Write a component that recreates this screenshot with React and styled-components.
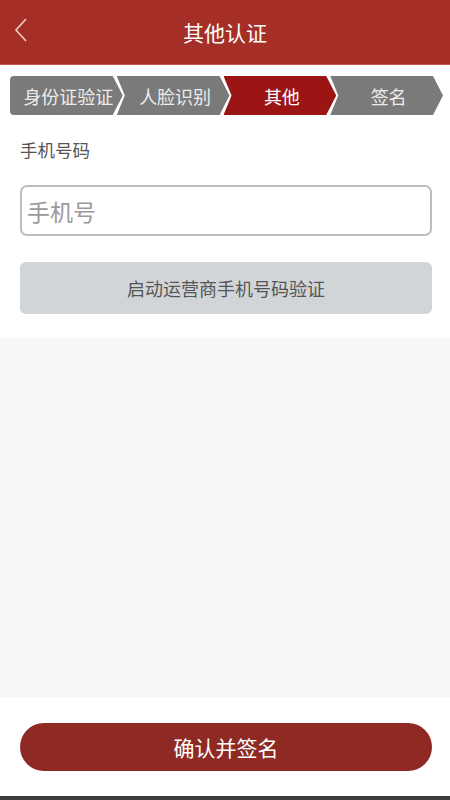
import React from 'react';
import styled, { createGlobalStyle } from 'styled-components';

const GlobalStyle = createGlobalStyle`
    html, body {
        margin: 0;
        padding: 0;
        background: #ffffff;
        font-family: "Noto Sans CJK SC", "Noto Sans", sans-serif;
    }
`;

const Page = styled.div`
    width: 450px;
    height: 800px;
    display: flex;
    flex-direction: column;
    background: #ffffff;
    overflow: hidden;
`;

const Header = styled.div`
    height: 64px;
    flex-shrink: 0;
    background: #a52f27;
    border-bottom: 1px solid #c0564f;
    display: flex;
    align-items: center;
    justify-content: center;
    position: relative;
    color: #ffffff;
    font-size: 21px;
`;

const Back = styled.div`
    position: absolute;
    left: 13px;
    top: 17px;
    width: 18px;
    height: 26px;
`;

const Steps = styled.div`
    display: flex;
    padding: 11px 7px 10px 10px;
    background: #ffffff;
`;

const Step = styled.div`
    flex: 1;
    height: 39px;
    margin-left: ${p => (p.$first ? '0' : '-6px')};
    background: ${p => (p.$active ? '#9b1515' : '#7a7a7a')};
    color: ${p => (p.$active ? '#ffffff' : '#ececec')};
    font-size: 18px;
    display: flex;
    align-items: center;
    justify-content: center;
    padding-left: 4px;
    box-sizing: border-box;
    border-radius: ${p => (p.$first ? '4px 0 0 4px' : '0')};
    clip-path: ${p =>
        p.$first
            ? 'polygon(0 0, calc(100% - 10px) 0, 100% 50%, calc(100% - 10px) 100%, 0 100%)'
            : 'polygon(0 0, calc(100% - 10px) 0, 100% 50%, calc(100% - 10px) 100%, 0 100%, 8px 50%)'};
`;

const Form = styled.div`
    padding: 14px 18px 24px 20px;
    background: #ffffff;
`;

const Label = styled.div`
    font-size: 17.5px;
    color: #555555;
    line-height: 22px;
`;

const Input = styled.input`
    display: block;
    width: 100%;
    height: 51px;
    margin-top: 24px;
    box-sizing: border-box;
    border: 2px solid #bdbdbd;
    border-radius: 7px;
    padding: 0 5px;
    font-family: inherit;
    font-size: 23px;
    color: #333;
    outline: none;
    &::placeholder {
        color: #9a9a9a;
    }
`;

const GrayButton = styled.div`
    margin-top: 26px;
    height: 52px;
    border-radius: 6px;
    background: #d2d5d8;
    color: #555555;
    font-size: 18px;
    display: flex;
    align-items: center;
    justify-content: center;
`;

const Body = styled.div`
    flex: 1;
    background: #f8f8f8;
`;

const Footer = styled.div`
    height: 99px;
    flex-shrink: 0;
    padding: 26px 18px 0 20px;
    box-sizing: border-box;
    background: #ffffff;
`;

const MainButton = styled.div`
    height: 48px;
    border-radius: 24px;
    background: #8e2a23;
    color: #ffffff;
    font-size: 21px;
    display: flex;
    align-items: center;
    justify-content: center;
`;

const BottomBar = styled.div`
    height: 4px;
    flex-shrink: 0;
    background: #3c3c3c;
`;

const steps = ['身份证验证', '人脸识别', '其他', '签名'];

const App = () => {
    return (
        <>
            <GlobalStyle />
            <Page>
                <Header>
                    <Back>
                        <svg width="18" height="26" viewBox="0 0 18 26">
                            <polyline points="13,2 3,13 13,24" fill="none" stroke="#f1cfca" strokeWidth="1.6" />
                        </svg>
                    </Back>
                    其他认证
                </Header>
                <Steps>
                    {steps.map((s, i) => (
                        <Step key={s} $first={i === 0} $active={i === 2}>
                            {s}
                        </Step>
                    ))}
                </Steps>
                <Form>
                    <Label>手机号码</Label>
                    <Input placeholder="手机号" />
                    <GrayButton>启动运营商手机号码验证</GrayButton>
                </Form>
                <Body />
                <Footer>
                    <MainButton>确认并签名</MainButton>
                </Footer>
                <BottomBar />
            </Page>
        </>
    );
};

export default App;
